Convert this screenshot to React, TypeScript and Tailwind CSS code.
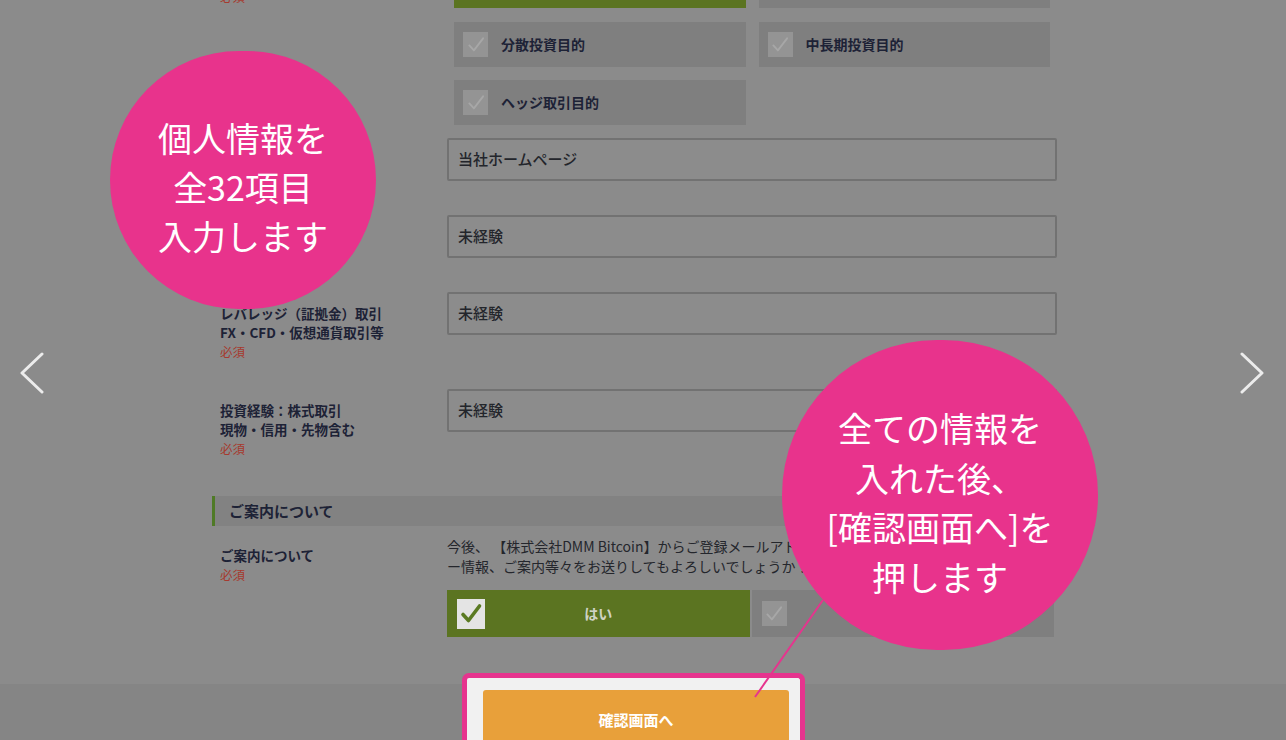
import React from 'react';

const Tick = ({ on }: { on?: boolean }) => (
  <span
    className={`flex items-center justify-center shrink-0 ${
      on ? 'w-[28px] h-[30px] bg-[#e4e4e4]' : 'w-[25px] h-[25px] bg-[#949494]'
    }`}
  >
    <svg viewBox="0 0 24 24" className={on ? 'w-[24px] h-[24px]' : 'w-[20px] h-[20px]'} fill="none">
      <path
        d="M4 12.5l5.5 6L20.5 4"
        stroke={on ? '#5a7a22' : '#a7a7a7'}
        strokeWidth={on ? 3.6 : 2.2}
        strokeLinecap="round"
        strokeLinejoin="round"
      />
    </svg>
  </span>
);

const Option = ({ label }: { label?: string }) => (
  <div className="h-[45px] bg-[#7f7f7f] flex items-center pl-[9px] gap-[13px]">
    <Tick />
    <span className="text-[14px] font-bold text-[#1d2236]">{label}</span>
  </div>
);

const Required = () => <p className="text-[12.5px] leading-[20px] text-[#a63a2e]">必須</p>;

const Row = ({ label, children, className = '' }: { label?: React.ReactNode; children: React.ReactNode; className?: string }) => (
  <div className={`flex ${className}`}>
    <div className="w-[235px] pl-[8px] shrink-0">{label}</div>
    <div className="flex-1">{children}</div>
  </div>
);

const Field = ({ value }: { value: string }) => (
  <div className="h-[43px] border-2 border-[#727272] rounded-[2px] bg-[#8c8c8c] flex items-center pl-[9px] text-[15px] font-medium text-[#23252b]">
    {value}
  </div>
);

const Label = ({ lines }: { lines: string[] }) => (
  <div className="pt-[12px]">
    {lines.map((l) => (
      <p key={l} className="text-[13.5px] leading-[19px] font-bold text-[#1d2236] whitespace-nowrap">
        {l}
      </p>
    ))}
    <Required />
  </div>
);

const App: React.FC = () => {
  return (
    <div className="relative w-[1286px] h-[740px] overflow-hidden bg-[#8b8b8b] font-['Noto_Sans_CJK_JP','Noto_Sans',sans-serif]">
      <div className="flex flex-col h-full">
        <div className="flex-1 min-h-0 ml-[212px] w-[845px] -mt-[37px]">
          {/* investment purpose */}
          <Row label={<div className="pt-[24px]"><Required /></div>}>
            <div className="grid grid-cols-2 gap-[13px] px-[7px]">
              <div className="h-[45px] bg-[#5b7421]" />
              <div className="h-[45px] bg-[#7f7f7f]" />
            </div>
          </Row>
          <Row className="mt-[14px]">
            <div className="grid grid-cols-2 gap-[13px] px-[7px]">
              <Option label="分散投資目的" />
              <Option label="中長期投資目的" />
            </div>
          </Row>
          <Row className="mt-[13px]">
            <div className="grid grid-cols-2 gap-[13px] px-[7px]">
              <Option label="ヘッジ取引目的" />
            </div>
          </Row>

          <Row className="mt-[13px]">
            <Field value="当社ホームページ" />
          </Row>
          <Row className="mt-[34px]">
            <Field value="未経験" />
          </Row>
          <Row className="mt-[34px]" label={<Label lines={['レバレッジ（証拠金）取引', 'FX・CFD・仮想通貨取引等']} />}>
            <Field value="未経験" />
          </Row>
          <Row className="mt-[27px]" label={<Label lines={['投資経験：株式取引', '現物・信用・先物含む']} />}>
            <Field value="未経験" />
          </Row>

          {/* section header */}
          <div className="mt-[37px] h-[30px] bg-[#828282] border-l-[3px] border-[#4f7a26] flex items-center pl-[14px]">
            <span className="text-[15px] font-bold text-[#1d2236]">ご案内について</span>
          </div>

          <Row
            className="mt-[10px]"
            label={
              <div className="pt-[10px]">
                <p className="text-[13.5px] leading-[19px] font-bold text-[#1d2236]">ご案内について</p>
                <Required />
              </div>
            }
          >
            <p className="text-[14px] leading-[20px] text-[#24262c] whitespace-nowrap">
              今後、 【株式会社DMM Bitcoin】からご登録メールアドレスへキャンペーン、ニュースレタ
              <br />
              ー情報、ご案内等々をお送りしてもよろしいでしょうか？
            </p>
            <div className="mt-[14px] flex gap-[2px] w-[607px]">
              <div className="flex-1 h-[47px] bg-[#5b7421] flex items-center pl-[10px]">
                <Tick on />
                <span className="flex-1 text-center pr-[38px] text-[14px] font-bold text-[#cfd3c4]">はい</span>
              </div>
              <div className="flex-1 h-[47px] bg-[#7f7f7f] flex items-center pl-[10px]">
                <Tick />
                <span className="flex-1 text-center pr-[38px] text-[14px] font-bold text-[#cfcfcf]">いいえ</span>
              </div>
            </div>
          </Row>
        </div>

        {/* footer */}
        <footer className="h-[56px] shrink-0 bg-[#858585] pl-[462px]">
          <div className="-mt-[11px] w-[343px] h-[80px] border-[5px] border-b-0 border-[#e6348e] rounded-t-[7px] bg-[#f1f1f1] pt-[12px] pl-[16px] pr-[11px]">
            <button className="w-full h-[60px] rounded-[3px] bg-[#e8a03a] text-white text-[15px] font-bold">
              確認画面へ
            </button>
          </div>
        </footer>
      </div>

      {/* pointer line */}
      <svg className="absolute inset-0 pointer-events-none" width="1286" height="740">
        <line x1="823" y1="600" x2="755" y2="697" stroke="#e6348e" strokeWidth="2" />
      </svg>

      {/* callout bubbles */}
      <div className="absolute left-[110px] top-[51px] w-[266px] h-[258px] rounded-full bg-[#e8338c] flex flex-col items-center justify-center text-white text-[34px] leading-[49px] font-normal pt-[12px]">
        <p>個人情報を</p>
        <p>全32項目</p>
        <p>入力します</p>
      </div>
      <div className="absolute left-[782px] top-[340px] w-[316px] h-[310px] rounded-full bg-[#e8338c] flex flex-col items-center justify-center text-white text-[34px] leading-[49.5px] font-normal pt-[14px]">
        <p>全ての情報を</p>
        <p>入れた後、</p>
        <p>[確認画面へ]を</p>
        <p>押します</p>
      </div>

      {/* slider arrows */}
      <svg className="absolute left-[18px] top-[352px]" width="28" height="42" viewBox="0 0 28 42" fill="none">
        <polyline points="24,2 4,21 24,40" stroke="#ececec" strokeWidth="3" strokeLinecap="round" strokeLinejoin="round" />
      </svg>
      <svg className="absolute left-[1238px] top-[352px]" width="28" height="42" viewBox="0 0 28 42" fill="none">
        <polyline points="4,2 24,21 4,40" stroke="#ececec" strokeWidth="3" strokeLinecap="round" strokeLinejoin="round" />
      </svg>
    </div>
  );
};

export default App;
